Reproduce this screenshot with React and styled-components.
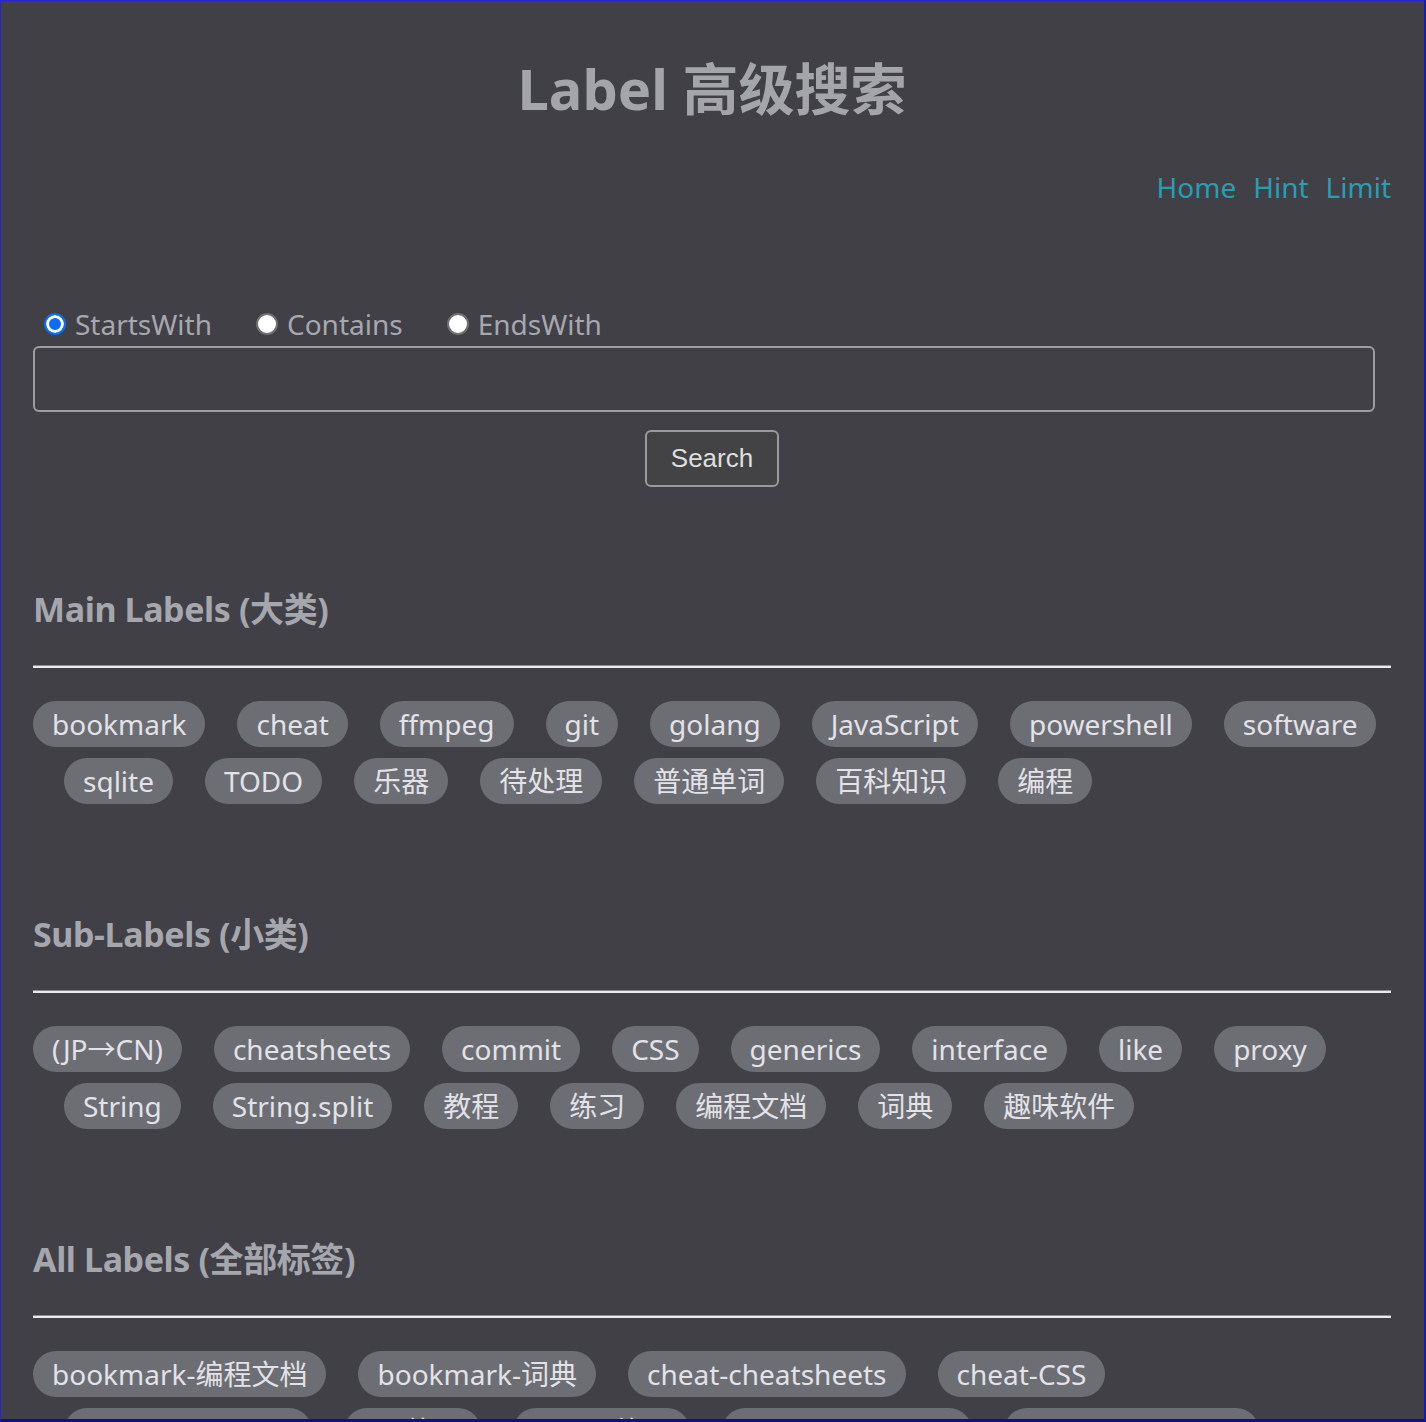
import React, { useState } from "react";
import styled, { createGlobalStyle } from "styled-components";

const GlobalStyle = createGlobalStyle`
  html, body {
    margin: 0;
    padding: 0;
    overflow: hidden;
    background: #414047;
  }
  body {
    font-family: "Noto Sans", "Noto Sans CJK SC", sans-serif;
  }
  * { box-sizing: border-box; }
`;

const Frame = styled.div`
  position: fixed;
  inset: 0;
  pointer-events: none;
  z-index: 10;
  border-top: 1px solid #2424d2;
  border-left: 1px solid #2424d2;
  border-right: 2px solid #1a1ab0;
  border-bottom: 3px solid #10108a;
`;

const Page = styled.div`
  padding: 50px 35px 0 33px;
  min-height: 100vh;
  background: #414047;
  color: #a6a6ad;
`;

const Title = styled.h1`
  margin: 0;
  font-size: 56px;
  line-height: 76px;
  font-weight: 700;
  text-align: center;
  color: #a4a4ab;
`;

const Nav = styled.nav`
  margin-top: 42px;
  display: flex;
  justify-content: flex-end;
  gap: 17px;
  font-size: 28px;
  line-height: 38px;
`;

const NavLink = styled.a`
  color: #2a9db1;
  text-decoration: none;
`;

const RadioRow = styled.div`
  margin-top: 99px;
  display: flex;
  align-items: center;
  height: 38px;
`;

const RadioLabel = styled.label`
  display: flex;
  align-items: center;
  margin-right: 33px;
  font-size: 28px;
  line-height: 38px;
  color: #a7a7ae;
  cursor: pointer;
`;

const Radio = styled.input`
  appearance: none;
  width: 22px;
  height: 22px;
  margin: 0 9px 0 11px;
  border-radius: 50%;
  border: 2px solid #707070;
  background: #ffffff;
  &:checked {
    border-color: #0b6cf8;
    background: #0b6cf8;
    box-shadow: inset 0 0 0 3px #ffffff;
  }
`;

const SearchInput = styled.input`
  display: block;
  margin-top: 3px;
  width: calc(100% - 16px);
  height: 66px;
  border: 2px solid #9c9ca2;
  border-radius: 6px;
  background: transparent;
  color: #e0e0e0;
  font-size: 28px;
  padding: 0 12px;
  outline: none;
`;

const SearchButton = styled.button`
  display: block;
  margin: 18px auto 0;
  padding: 11px 24px;
  line-height: 31px;
  font-family: "Liberation Sans", Arial, sans-serif;
  font-size: 26px;
  color: #dedede;
  background: #434345;
  border: 2px solid #9a9a9d;
  border-radius: 6px;
  cursor: pointer;
`;

const Section = styled.section`
  margin-top: ${(p) => p.$top}px;
`;

const SectionTitle = styled.h2`
  margin: 0;
  font-size: 34px;
  line-height: 49px;
  font-weight: 700;
  letter-spacing: -0.4px;
  color: #a6a6ad;
`;

const Rule = styled.hr`
  margin: 31px 0 0;
  height: 0;
  border: none;
  border-top: 1px solid #8e8e92;
  border-bottom: 2px solid #ececee;
`;

const TagList = styled.div`
  margin-top: 33px;
  display: flex;
  flex-wrap: wrap;
  gap: 11px 32px;
  padding: 0 14px 0 31px;
  & > :first-child {
    margin-left: -31px;
  }
`;

const Tag = styled.a`
  display: inline-block;
  height: 46px;
  padding: 4px 19px;
  line-height: 38px;
  font-size: 28px;
  white-space: nowrap;
  border-radius: 23px;
  background: #6d6d74;
  color: #e2e2e7;
  text-decoration: none;
`;

const mainLabels = [
  "bookmark", "cheat", "ffmpeg", "git", "golang", "JavaScript", "powershell", "software",
  "sqlite", "TODO", "乐器", "待处理", "普通单词", "百科知识", "编程",
];

const subLabels = [
  "(JP→CN)", "cheatsheets", "commit", "CSS", "generics", "interface", "like", "proxy",
  "String", "String.split", "教程", "练习", "编程文档", "词典", "趣味软件",
];

const allLabels = [
  "bookmark-编程文档", "bookmark-词典", "cheat-cheatsheets", "cheat-CSS",
  "cheat-JavaScript", "git-练习", "proxy-练习", "golang-generics", "golang-interface",
  "powershell-教程", "software-趣味软件", "sqlite-教程", "TODO-待处理", "编程-String",
];

function LabelSection({ title, labels, top }) {
  return (
    <Section $top={top}>
      <SectionTitle>{title}</SectionTitle>
      <Rule />
      <TagList>
        {labels.map((l) => (
          <Tag key={l} href="#">{l}</Tag>
        ))}
      </TagList>
    </Section>
  );
}

export default function App() {
  const [mode, setMode] = useState("StartsWith");
  return (
    <>
      <GlobalStyle />
      <Frame />
      <Page>
        <Title>Label 高级搜索</Title>
        <Nav>
          <NavLink href="#">Home</NavLink>
          <NavLink href="#">Hint</NavLink>
          <NavLink href="#">Limit</NavLink>
        </Nav>
        <RadioRow>
          {["StartsWith", "Contains", "EndsWith"].map((m) => (
            <RadioLabel key={m}>
              <Radio
                type="radio"
                name="mode"
                checked={mode === m}
                onChange={() => setMode(m)}
              />
              {m}
            </RadioLabel>
          ))}
        </RadioRow>
        <SearchInput type="text" />
        <SearchButton type="button">Search</SearchButton>
        <LabelSection title="Main Labels (大类)" labels={mainLabels} top={98} />
        <LabelSection title="Sub-Labels (小类)" labels={subLabels} top={106} />
        <LabelSection title="All Labels (全部标签)" labels={allLabels} top={106} />
      </Page>
    </>
  );
}
